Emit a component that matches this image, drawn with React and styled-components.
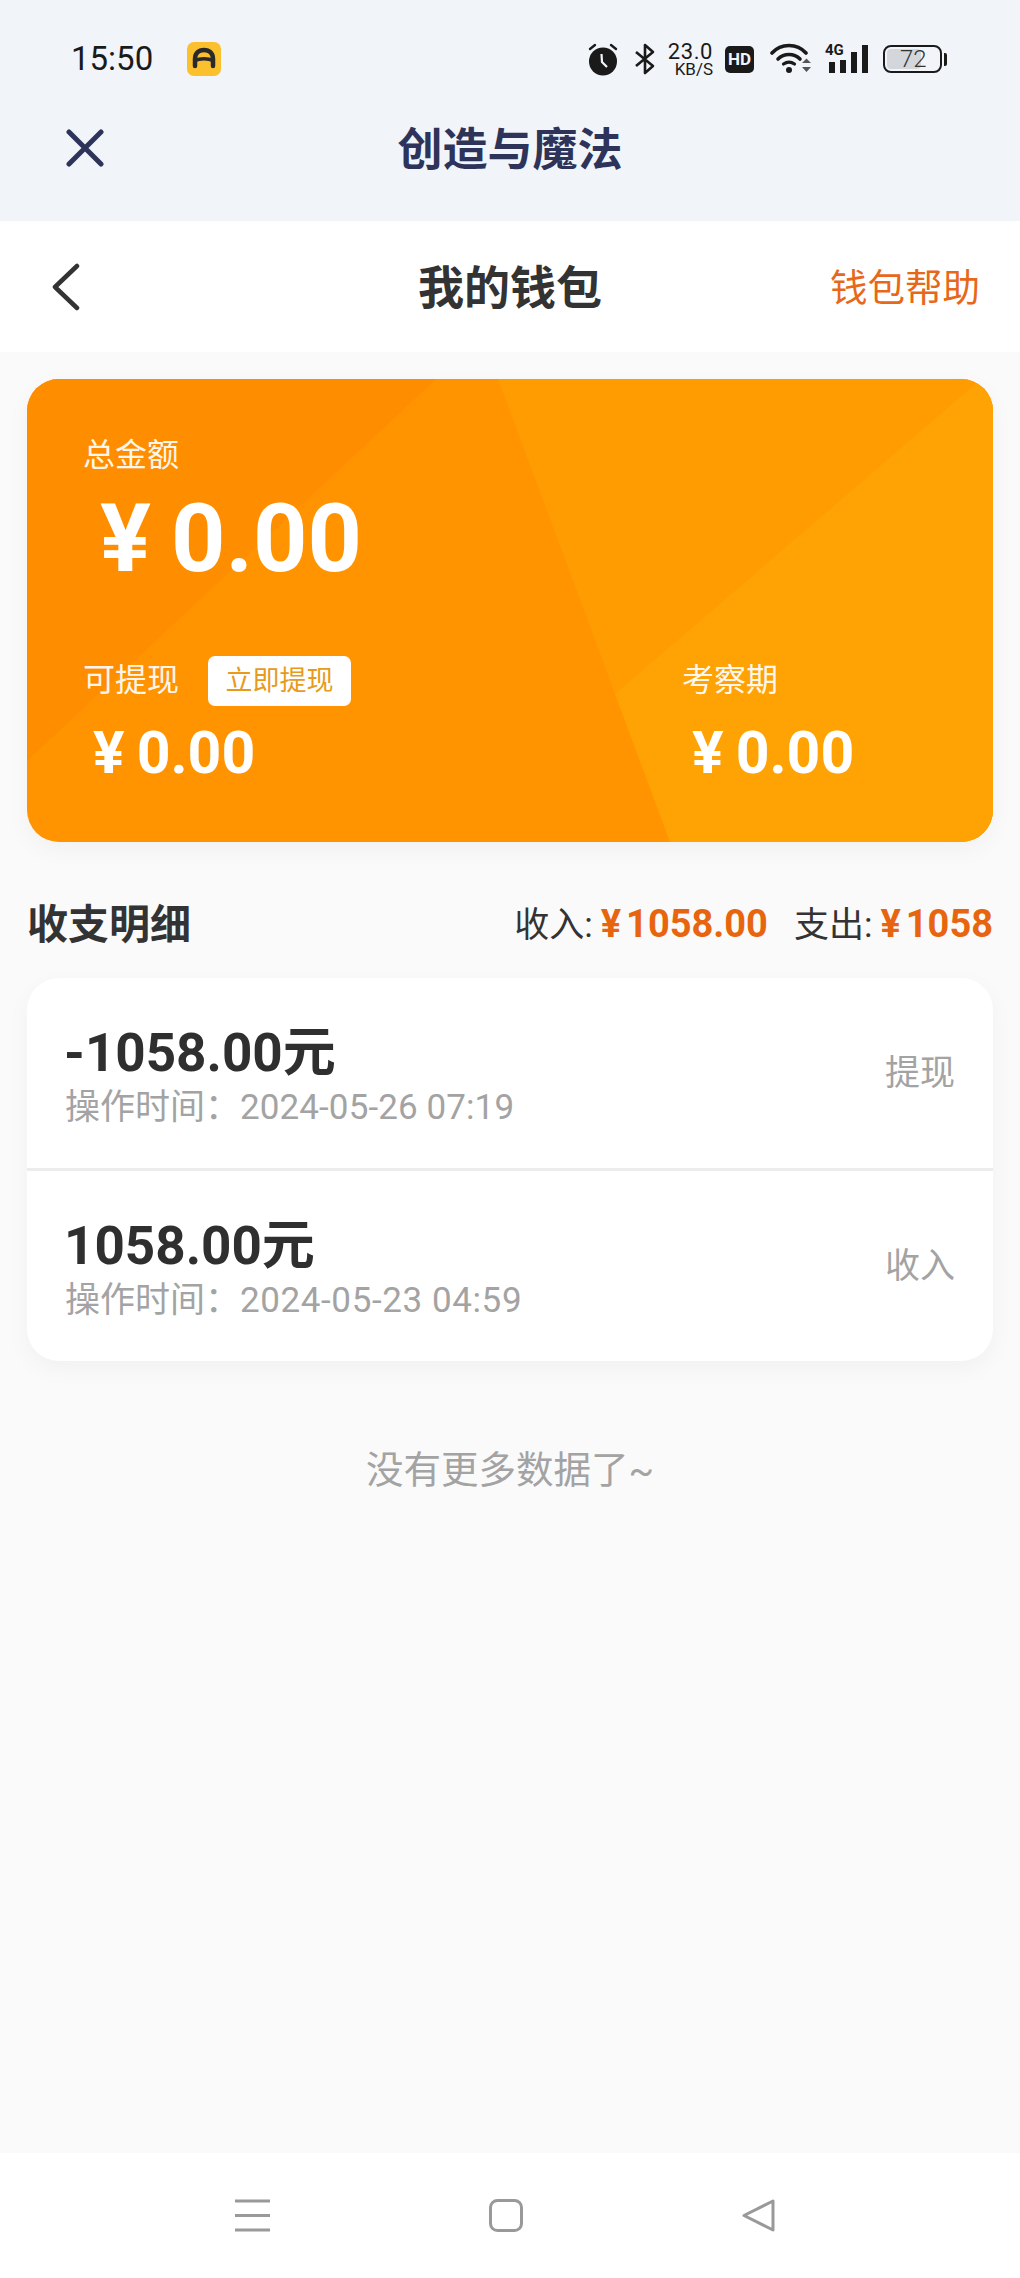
import React from 'react';
import styled, { createGlobalStyle } from 'styled-components';

const FONT = `Roboto, "Noto Sans CJK SC", sans-serif`;

const GlobalStyle = createGlobalStyle`
  html, body {
    margin: 0;
    padding: 0;
    background: #fafafa;
  }
  * { box-sizing: border-box; }
`;

const records = [
  { amount: '-1058.00元', time: '2024-05-26 07:19', type: '提现', track: 0.1 },
  { amount: '1058.00元', time: '2024-05-23 04:59', type: '收入', track: 0.6 },
];

const App = () => {
  return (
    <>
      <GlobalStyle />
      <Page>
        <TopBlock>
          <StatusBar>
            <StatusLeft>
              <Clock>15:50</Clock>
              <AppBadge>
                <svg width="34" height="34" viewBox="0 0 34 34">
                  <rect width="34" height="34" rx="7" fill="#fbc02d" />
                  <path d="M8 24 V17 C8 11.500 11.500 8 17 8 C22.500 8 26 11.500 26 17 V24" fill="none" stroke="#2a2a2a" strokeWidth="4.500" strokeLinecap="round" />
                  <path d="M8 18.500 C13 16 21 16 26 18.500" fill="none" stroke="#2a2a2a" strokeWidth="3.500" />
                </svg>
              </AppBadge>
            </StatusLeft>
            <StatusRight>
              <svg width="30" height="33" viewBox="0 0 30 33">
                <circle cx="15" cy="18.500" r="14" fill="#1a1a1a" />
                <path d="M13.500 11 L14 19 L19 24" fill="none" stroke="#f1f5f9" strokeWidth="2.200" />
                <path d="M2 6 L7 2 M28 6 L23 2" stroke="#1a1a1a" strokeWidth="2.400" strokeLinecap="round" />
              </svg>
              <BluetoothIcon width="20" height="32" viewBox="0 0 20 32">
                <path d="M1 9 L18 23 L10 30 V2 L18 9 L1 23" fill="none" stroke="#1a1a1a" strokeWidth="2.600" strokeLinejoin="round" />
              </BluetoothIcon>
              <Speed>
                <SpeedValue>23.0</SpeedValue>
                <SpeedUnit>KB/S</SpeedUnit>
              </Speed>
              <HdBadge>HD</HdBadge>
              <WifiIcon width="42" height="32" viewBox="0 0 42 32">
                <path d="M2 10 C11 0 27 0 36 10" fill="none" stroke="#1a1a1a" strokeWidth="3.600" strokeLinecap="round" />
                <path d="M8 16 C14 10 24 10 30 16" fill="none" stroke="#1a1a1a" strokeWidth="3.600" strokeLinecap="round" />
                <path d="M13.500 21 C17 18.500 21 18.500 24.500 21" fill="none" stroke="#1a1a1a" strokeWidth="3.200" strokeLinecap="round" />
                <circle cx="19" cy="27" r="3" fill="#1a1a1a" />
                <path d="M32 20 H41 L36.500 15.500 Z M32 24 H41 L36.500 29 Z" fill="#555" />
              </WifiIcon>
              <Signal>
                <SignalLabel>4G</SignalLabel>
                <SignalBar $height={11} />
                <SignalBar $height={13} />
                <SignalBar $height={21} />
                <SignalBar $height={28} />
              </Signal>
              <Battery>
                <BatteryLevel />
                <BatteryText>72</BatteryText>
              </Battery>
              <BatteryCap />
            </StatusRight>
          </StatusBar>
          <TitleRow>
            <svg width="38" height="38" viewBox="0 0 38 38">
              <path d="M3 3 L35 35 M35 3 L3 35" stroke="#2e3459" strokeWidth="5" strokeLinecap="round" />
            </svg>
            <AppTitle>创造与魔法</AppTitle>
          </TitleRow>
        </TopBlock>

        <Header>
          <BackIcon width="28" height="48" viewBox="0 0 28 48">
            <path d="M25 3 L3 24 L25 45" fill="none" stroke="#333" strokeWidth="4.500" strokeLinecap="round" strokeLinejoin="round" />
          </BackIcon>
          <HeaderTitle>我的钱包</HeaderTitle>
          <HelpLink>钱包帮助</HelpLink>
        </Header>

        <Content>
          <WalletCard>
            <CardArt viewBox="0 0 966 463" preserveAspectRatio="none">
              <polygon points="0,0 409,0 0,382" fill="#ff8d00" />
              <polygon points="471,0 966,0 966,463 643,463" fill="#ff9c02" />
              <polygon points="966,-10 588,315 643,463 966,463" fill="#ffa204" />
            </CardArt>
            <CardBody>
              <CardLabel>总金额</CardLabel>
              <TotalAmount><Yen $gap={20}>¥</Yen>0.00</TotalAmount>
              <CardColumns>
                <div>
                  <LabelRow>
                    <CardLabel>可提现</CardLabel>
                    <WithdrawButton>立即提现</WithdrawButton>
                  </LabelRow>
                  <SmallAmount><Yen $gap={12}>¥</Yen>0.00</SmallAmount>
                </div>
                <div>
                  <LabelRow>
                    <CardLabel>考察期</CardLabel>
                  </LabelRow>
                  <SmallAmount><Yen $gap={12}>¥</Yen>0.00</SmallAmount>
                </div>
              </CardColumns>
            </CardBody>
          </WalletCard>

          <SectionHead>
            <SectionTitle>收支明细</SectionTitle>
            <Summary>
              <SummaryItem>收入:<SummaryValue><Yen $gap={5}>¥</Yen>1058.00</SummaryValue></SummaryItem>
              <SummaryItem>支出:<SummaryValue><Yen $gap={5}>¥</Yen>1058</SummaryValue></SummaryItem>
            </Summary>
          </SectionHead>

          <RecordList>
            {records.map((r) => (
              <RecordRow key={r.time}>
                <RecordInfo>
                  <RecordAmount>{r.amount}</RecordAmount>
                  <RecordTime><TimeLabel>操作时间：</TimeLabel><TimeValue $track={r.track}>{r.time}</TimeValue></RecordTime>
                </RecordInfo>
                <RecordType>{r.type}</RecordType>
              </RecordRow>
            ))}
          </RecordList>

          <EndText>没有更多数据了~</EndText>
        </Content>

        <NavBar>
          <svg width="35" height="33" viewBox="0 0 35 33">
            <path d="M0 2 H35 M0 16.500 H35 M0 31 H35" stroke="#999" strokeWidth="3" />
          </svg>
          <svg width="34" height="33" viewBox="0 0 34 33">
            <rect x="1.500" y="1.500" width="31" height="30" rx="7" fill="none" stroke="#999" strokeWidth="3" />
          </svg>
          <svg width="33" height="33" viewBox="0 0 33 33">
            <path d="M31 2 V31 L2 16.500 Z" fill="none" stroke="#999" strokeWidth="3" strokeLinejoin="round" />
          </svg>
        </NavBar>
      </Page>
    </>
  );
};

const Page = styled.div`
  min-height: 2278px;
  display: flex;
  flex-direction: column;
  background: #fafafa;
  font-family: ${FONT};
`;

const TopBlock = styled.div`
  height: 221px;
  background: #f1f5f9;
`;

const StatusBar = styled.div`
  height: 116px;
  display: flex;
  align-items: center;
  justify-content: space-between;
  padding: 2px 73px 0 71px;
`;

const StatusLeft = styled.div`
  display: flex;
  align-items: center;
  gap: 34px;
`;

const Clock = styled.span`
  font-size: 33px;
  line-height: 40px;
  color: #1a1a1a;
`;

const AppBadge = styled.span`
  display: flex;
`;

const StatusRight = styled.div`
  display: flex;
  align-items: center;
`;

const BluetoothIcon = styled.svg`
  margin-left: 17px;
`;

const WifiIcon = styled.svg`
  margin-left: 16px;
`;

const Speed = styled.div`
  display: flex;
  flex-direction: column;
  align-items: flex-end;
  margin-left: 13px;
  width: 45px;
  color: #1a1a1a;
`;

const SpeedValue = styled.span`
  font-size: 22px;
  line-height: 19px;
  letter-spacing: 0.6px;
`;

const SpeedUnit = styled.span`
  font-size: 17px;
  line-height: 16px;
`;

const HdBadge = styled.span`
  width: 29px;
  height: 27px;
  margin-left: 12px;
  border-radius: 5px;
  background: #1a1a1a;
  color: #f1f5f9;
  font-size: 17px;
  font-weight: 700;
  line-height: 27px;
  text-align: center;
`;

const Signal = styled.div`
  position: relative;
  display: flex;
  align-items: flex-end;
  justify-content: flex-end;
  gap: 5px;
  width: 43px;
  height: 28px;
  margin-left: 13px;
`;

const SignalLabel = styled.span`
  position: absolute;
  left: 0;
  top: -3px;
  font-size: 15px;
  font-weight: 700;
  line-height: 16px;
  color: #1a1a1a;
`;

const SignalBar = styled.span`
  display: block;
  width: 6px;
  height: ${(p) => p.$height}px;
  background: #1a1a1a;
`;

const Battery = styled.div`
  position: relative;
  width: 59px;
  height: 28px;
  margin-left: 15px;
  border: 2px solid #1a1a1a;
  border-radius: 8px;
  padding: 2px;
`;

const BatteryLevel = styled.div`
  width: 34px;
  height: 100%;
  background: #d3d6da;
  border-radius: 4px;
`;

const BatteryText = styled.span`
  position: absolute;
  left: 15px;
  top: 0;
  font-size: 24px;
  font-weight: 300;
  line-height: 24px;
  color: #333;
`;

const BatteryCap = styled.span`
  width: 3px;
  height: 13px;
  margin-left: 2px;
  background: #1a1a1a;
  border-radius: 0 2px 2px 0;
`;

const TitleRow = styled.div`
  position: relative;
  height: 64px;
  display: flex;
  align-items: center;
  padding-left: 66px;
`;

const AppTitle = styled.div`
  position: absolute;
  left: 0;
  right: 0;
  top: 3px;
  text-align: center;
  font-size: 45px;
  font-weight: 700;
  line-height: 64px;
  color: #2e3459;
`;

const Header = styled.div`
  height: 131px;
  display: grid;
  grid-template-columns: 1fr auto 1fr;
  align-items: center;
  padding: 0 40px;
  background: #fff;
`;

const BackIcon = styled.svg`
  margin-left: 12px;
`;

const HeaderTitle = styled.div`
  padding-top: 2px;
  font-size: 46px;
  font-weight: 700;
  line-height: 60px;
  color: #333;
`;

const HelpLink = styled.div`
  justify-self: end;
  padding-top: 2px;
  font-size: 37.5px;
  line-height: 50px;
  color: #e8681a;
`;

const Content = styled.div`
  padding: 27px 27px 0;
`;

const WalletCard = styled.div`
  position: relative;
  height: 463px;
  border-radius: 32px;
  background: #ff9300;
  box-shadow: 0 8px 24px rgba(0, 0, 0, 0.04);
  overflow: hidden;
`;

const CardArt = styled.svg`
  position: absolute;
  left: 0;
  top: 0;
  width: 100%;
  height: 100%;
`;

const CardBody = styled.div`
  position: relative;
  padding: 54px 0 0 56px;
  color: #fff;
`;

const CardLabel = styled.div`
  font-size: 32px;
  line-height: 44px;
  color: #fff;
  opacity: 0.92;
`;

const TotalAmount = styled.div`
  margin: 12px 0 0 17px;
  font-size: 95px;
  font-weight: 700;
  line-height: 100px;
`;

const Yen = styled.span`
  margin-right: ${(p) => p.$gap}px;
`;

const CardColumns = styled.div`
  display: grid;
  grid-template-columns: 599px 1fr;
  margin-top: 67px;
`;

const LabelRow = styled.div`
  display: flex;
  align-items: center;
  gap: 29px;
  height: 50px;
  & > ${CardLabel} {
    margin-bottom: 3px;
  }
`;

const WithdrawButton = styled.div`
  width: 143px;
  height: 50px;
  border-radius: 7px;
  background: #fff;
  color: #e79a1c;
  font-size: 27px;
  line-height: 50px;
  text-align: center;
`;

const SmallAmount = styled.div`
  margin: 15px 0 0 10px;
  font-size: 59px;
  font-weight: 700;
  line-height: 64px;
`;

const SectionHead = styled.div`
  display: flex;
  align-items: center;
  justify-content: space-between;
  height: 50px;
  margin-top: 58px;
`;

const SectionTitle = styled.div`
  font-size: 41px;
  font-weight: 700;
  line-height: 50px;
  color: #333;
`;

const Summary = styled.div`
  display: flex;
  gap: 26px;
  white-space: nowrap;
`;

const SummaryItem = styled.div`
  font-size: 35px;
  line-height: 50px;
  color: #333;
`;

const SummaryValue = styled.span`
  margin-left: 8px;
  font-size: 38px;
  font-weight: 700;
  color: #e8650f;
`;

const RecordList = styled.div`
  margin-top: 28px;
  border-radius: 32px;
  background: #fff;
  box-shadow: 0 8px 24px rgba(0, 0, 0, 0.04);
  overflow: hidden;
`;

const RecordRow = styled.div`
  height: 190px;
  display: flex;
  align-items: center;
  justify-content: space-between;
  padding: 0 38px;
  & + & {
    height: 193px;
    border-top: 3px solid #ececec;
  }
`;

const RecordInfo = styled.div`
  padding-top: 7px;
`;

const RecordAmount = styled.div`
  margin-left: -1px;
  font-size: 53px;
  font-weight: 700;
  line-height: 60px;
  color: #2f2f2f;
`;

const RecordTime = styled.div`
  margin-top: 3px;
  font-size: 35px;
  line-height: 44px;
  color: #a3a3a3;
`;

const TimeLabel = styled.span`
  font-size: 35px;
`;

const TimeValue = styled.span`
  letter-spacing: ${(p) => p.$track}px;
`;

const RecordType = styled.div`
  padding-top: 2px;
  font-size: 35px;
  line-height: 44px;
  color: #a3a3a3;
`;

const EndText = styled.div`
  margin-top: 84px;
  font-size: 37.5px;
  line-height: 50px;
  text-align: center;
  color: #a3a3a3;
`;

const NavBar = styled.div`
  margin-top: auto;
  height: 125px;
  display: flex;
  align-items: center;
  gap: 219px;
  padding: 0 0 0 235px;
  background: #fff;
`;

export default App;
